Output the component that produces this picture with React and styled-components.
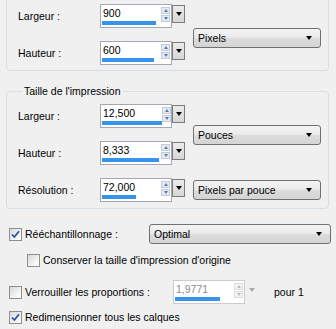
import React from 'react'
import styled, { createGlobalStyle } from 'styled-components'

const Global = createGlobalStyle`
  html, body { margin: 0; padding: 0; background: #f0f0f0; }
  body { font-family: "Liberation Sans", Arial, sans-serif; font-size: 10.5px; color: #000; }
`

const Page = styled.div`
  width: 336px;
  height: 329px;
  overflow: hidden;
  padding-left: 6px;
  box-sizing: border-box;
`

const TopGroup = styled.div`
  width: 323px;
  box-sizing: border-box;
  border: 1px solid #d5dfe5;
  border-top: none;
  border-radius: 0 0 4px 4px;
  padding: 4px 0 5px 11px;
`

const Group = styled.fieldset`
  margin: 14px 0 0;
  width: 323px;
  box-sizing: border-box;
  border: 1px solid #d5dfe5;
  border-radius: 4px;
  padding: 6px 0 6px 11px;
`

const Legend = styled.legend`
  padding: 0 2px;
  margin-left: 4px;
  line-height: 13px;
`

const Grid = styled.div`
  display: grid;
  grid-template-columns: 75px 86px 128px;
  column-gap: 7px;
  grid-auto-rows: 24px;
  row-gap: 13px;
  align-items: center;
`

const Label = styled.span`
  white-space: nowrap;
`

const SelectCell = styled.div`
  grid-column: 3;
  grid-row: ${p => p.$rows};
  align-self: center;
  margin-top: ${p => p.$mt || 0}px;
`

const Select = styled.div`
  display: flex;
  align-items: center;
  justify-content: space-between;
  height: 20px;
  width: ${p => p.$w || 128}px;
  box-sizing: border-box;
  border: 1px solid #707070;
  border-radius: 3px;
  background: linear-gradient(#f4f4f4, #e9e9e9 50%, #dcdcdc 51%, #d4d4d4);
  padding: 0 8px 0 4px;
`

const Tri = styled.span`
  width: 0;
  height: 0;
  border-left: 3.5px solid transparent;
  border-right: 3.5px solid transparent;
  border-top: 4px solid ${p => (p.$dim ? '#a9a9a9' : '#000')};
`

const SpinFrame = styled.div`
  display: flex;
  align-items: flex-start;
  height: 24px;
`

const SpinField = styled.div`
  width: 72px;
  height: 24px;
  box-sizing: border-box;
  border: 1px solid ${p => (p.$disabled ? '#c9cdd2' : '#a3a9b3')};
  background: #fff;
  display: grid;
  grid-template-columns: 1fr 9px;
  grid-template-rows: 15px 1fr;
  padding: 1px 1px 2px 1px;
`

const SpinText = styled.span`
  line-height: 14px;
  padding-left: 1px;
  color: ${p => (p.$disabled ? '#8d8d8d' : '#000')};
`

const Arrows = styled.div`
  grid-row: 1 / 3;
  grid-column: 2;
  display: flex;
  flex-direction: column;
  gap: 1px;
  padding-top: 1px;
`

const ArrowBtn = styled.div`
  height: 7px;
  box-sizing: border-box;
  border: 1px solid ${p => (p.$disabled ? '#dcdcdc' : '#c3cbd8')};
  background: ${p => (p.$disabled ? '#f4f4f4' : '#e6ebf3')};
  display: flex;
  align-items: center;
  justify-content: center;
`

const SmallTri = styled.span`
  width: 0;
  height: 0;
  border-left: 2.5px solid transparent;
  border-right: 2.5px solid transparent;
  ${p => (p.$up ? 'border-bottom' : 'border-top')}: 3px solid ${p => (p.$disabled ? '#b8b8b8' : '#5579b8')};
`

const BarTrack = styled.div`
  grid-row: 2;
  grid-column: 1;
  align-self: end;
  height: 4px;
`

const Bar = styled.div`
  height: 4px;
  background: #3894ea;
`

const DropBtn = styled.div`
  width: 13px;
  height: 18px;
  box-sizing: border-box;
  margin-top: 1px;
  border: 1px solid ${p => (p.$disabled ? 'transparent' : '#7c7c7c')};
  background: ${p => (p.$disabled ? 'transparent' : 'linear-gradient(#ececec, #d6d6d6)')};
  display: flex;
  align-items: center;
  justify-content: center;
`

const Spin = ({ value, fill, disabled }) => (
  <SpinFrame>
    <SpinField $disabled={disabled}>
      <SpinText $disabled={disabled}>{value}</SpinText>
      <Arrows>
        <ArrowBtn $disabled={disabled}><SmallTri $up $disabled={disabled} /></ArrowBtn>
        <ArrowBtn $disabled={disabled}><SmallTri $disabled={disabled} /></ArrowBtn>
      </Arrows>
      <BarTrack>
        <Bar style={{ width: fill }} />
      </BarTrack>
    </SpinField>
    <DropBtn $disabled={disabled}><Tri $dim={disabled} /></DropBtn>
  </SpinFrame>
)

const Dropdown = ({ text, w }) => (
  <Select $w={w}>
    <span>{text}</span>
    <Tri />
  </Select>
)

const Options = styled.div`
  padding-left: 3px;
  padding-top: 15px;
`

const OptRow = styled.div`
  display: flex;
  align-items: center;
  height: ${p => p.$h}px;
  margin-top: ${p => p.$mt || 0}px;
  padding-left: ${p => p.$indent || 0}px;
`

const Check = styled.span`
  width: 13px;
  height: 13px;
  box-sizing: border-box;
  border: 1px solid #8f8f8f;
  background: linear-gradient(135deg, #d9d9d9, #f6f6f6 70%, #ffffff);
  display: inline-flex;
  align-items: center;
  justify-content: center;
  flex-shrink: 0;
`

const CheckText = styled.span`
  margin-left: 3px;
  white-space: nowrap;
  width: ${p => (p.$w ? `${p.$w}px` : 'auto')};
`

const Tail = styled.span`
  margin-left: 16px;
`

const CheckBox = ({ checked }) => (
  <Check>
    {checked && (
      <svg width="9" height="9" viewBox="0 0 9 9">
        <path d="M1 4.5 L3.4 7 L8 1.2" fill="none" stroke="#2b4fa8" strokeWidth="1.8" />
      </svg>
    )}
  </Check>
)

const App = () => (
  <Page>
    <Global />
    <TopGroup>
      <Grid>
        <Label>Largeur :</Label>
        <Spin value="900" fill={54} />
        <SelectCell $rows="1 / 3" $mt={6}><Dropdown text="Pixels" /></SelectCell>
        <Label>Hauteur :</Label>
        <Spin value="600" fill={52} />
      </Grid>
    </TopGroup>
    <Group>
      <Legend>Taille de l'impression</Legend>
      <Grid>
        <Label>Largeur :</Label>
        <Spin value="12,500" fill={60} />
        <SelectCell $rows="1 / 3"><Dropdown text="Pouces" /></SelectCell>
        <Label>Hauteur :</Label>
        <Spin value="8,333" fill={57} />
        <Label>Résolution :</Label>
        <Spin value="72,000" fill={34} />
        <SelectCell $rows="3"><Dropdown text="Pixels par pouce" /></SelectCell>
      </Grid>
    </Group>
    <Options>
      <OptRow $h={20}>
        <CheckBox checked />
        <CheckText $w={124}>Rééchantillonnage :</CheckText>
        <Dropdown text="Optimal" w={182} />
      </OptRow>
      <OptRow $h={14} $mt={9} $indent={18}>
        <CheckBox />
        <CheckText>Conserver la taille d'impression d'origine</CheckText>
      </OptRow>
      <OptRow $h={24} $mt={13}>
        <CheckBox />
        <CheckText $w={148}>Verrouiller les proportions :</CheckText>
        <Spin value="1,9771" fill={45} disabled />
        <Tail>pour 1</Tail>
      </OptRow>
      <OptRow $h={14} $mt={6}>
        <CheckBox checked />
        <CheckText>Redimensionner tous les calques</CheckText>
      </OptRow>
    </Options>
  </Page>
)

export default App
